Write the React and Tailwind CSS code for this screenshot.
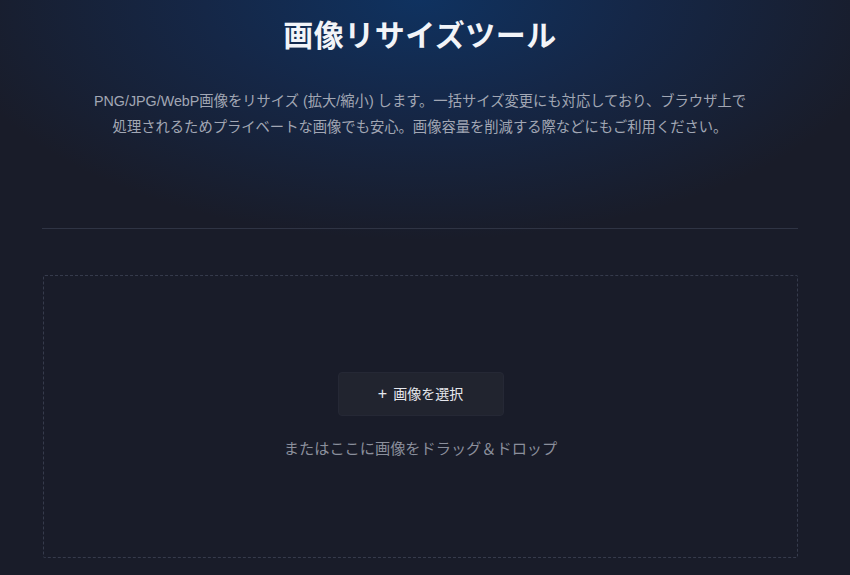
import React from 'react'

function App() {
    return (
        <div
            className="min-h-[575px] w-full bg-[#191c29] bg-[radial-gradient(ellipse_480px_240px_at_49.5%_0%,#0f3260_0%,#152747_45%,#191c29_100%)] text-white"
            style={{ fontFamily: '"Liberation Sans", "Noto Sans CJK JP", sans-serif' }}
        >
            <div className="pl-[42px] pr-[52px] pt-[18px] pb-[17px]">
                <header className="flex flex-col items-center text-center">
                    <h1 className="text-[30px] leading-9 font-bold text-[#f2f4f8] tracking-[0.5px]">画像リサイズツール</h1>
                    <p className="mt-[34px] text-[14.3px] leading-[26px] text-[#a2a7b4]">
                        PNG/JPG/WebP画像をリサイズ (拡大/縮小) します。一括サイズ変更にも対応しており、ブラウザ上で
                        <br />
                        処理されるためプライベートな画像でも安心。画像容量を削減する際などにもご利用ください。
                    </p>
                </header>

                <hr className="mt-[88px] border-0 border-t border-[#2f3444]" />

                <section className="mt-[46px] h-[283px] ml-px border border-dashed border-[#363b4c] rounded-[2px] flex flex-col items-center justify-center">
                    <button className="w-[166px] h-[44px] rounded-[4px] bg-[#21242f] border border-[#252835] text-[14px] text-[#e6e8ee] flex items-center justify-center gap-[6px]">
                        <span className="text-[16px] leading-none">+</span>
                        <span>画像を選択</span>
                    </button>
                    <p className="mt-[21px] text-[15.2px] leading-6 text-[#8b8f9c]">またはここに画像をドラッグ＆ドロップ</p>
                </section>
            </div>
        </div>
    )
}

export default App
